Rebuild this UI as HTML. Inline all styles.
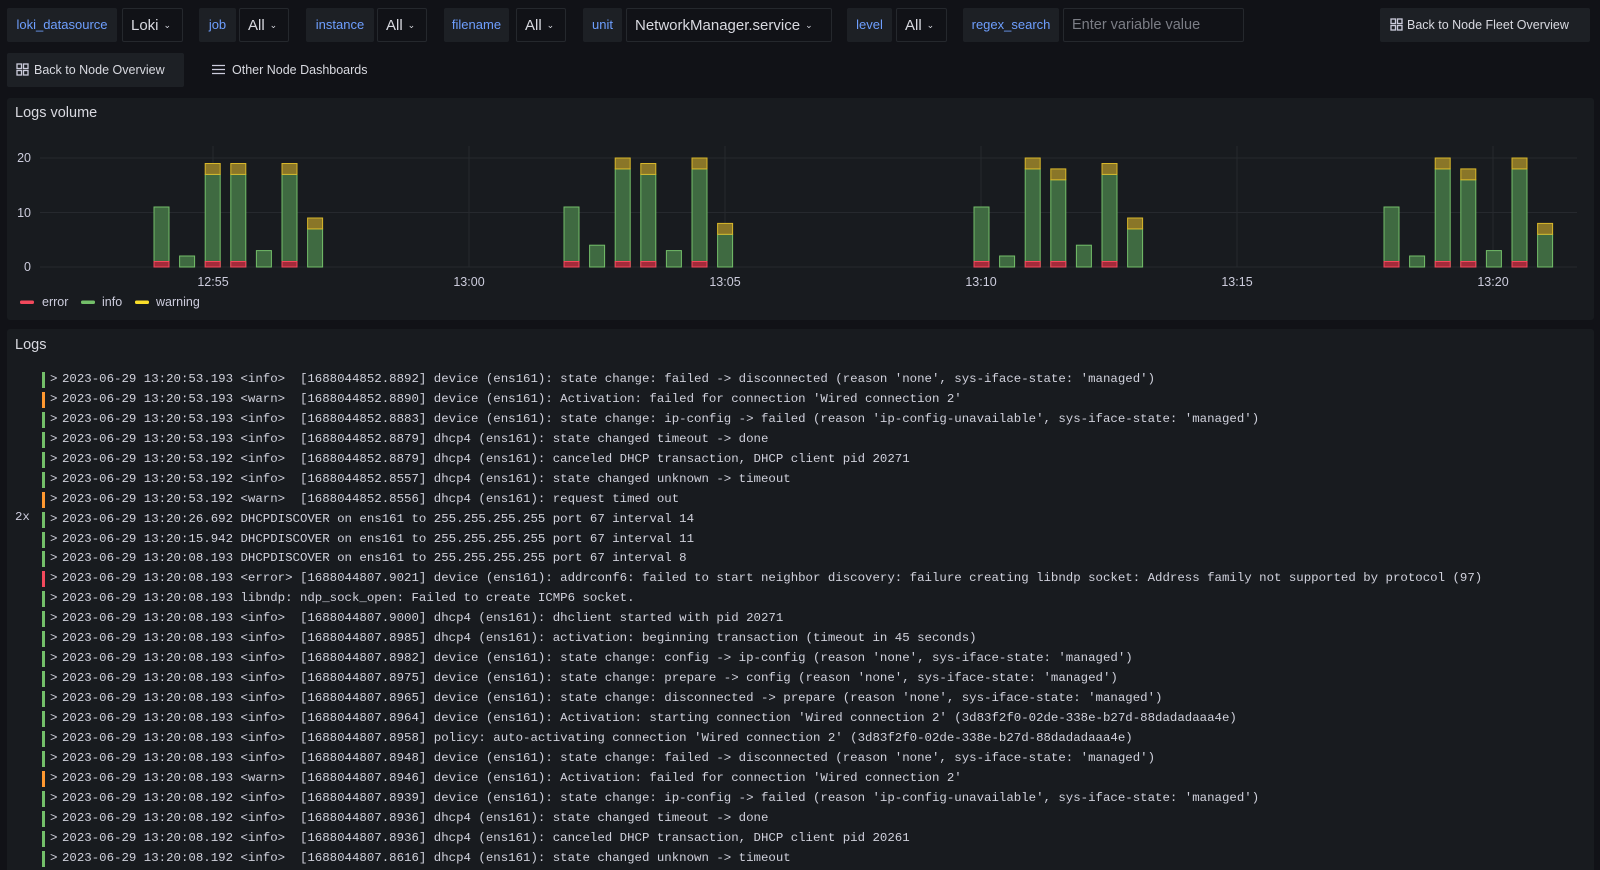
<!DOCTYPE html>
<html><head><meta charset="utf-8"><style>
*{box-sizing:border-box;margin:0;padding:0}
html,body{width:1600px;height:870px;overflow:hidden}
body{background:#111217;font-family:"Liberation Sans",sans-serif;color:#ccccdc;position:relative}
.a{position:absolute}
.lab{position:absolute;top:8px;height:34px;background:#1d2025;border-radius:2px;color:#6e9fff;font-size:13px;line-height:34px;text-align:center}
.val{position:absolute;top:8px;height:34px;background:#111217;border:1px solid #25282d;border-radius:2px;color:#d8d9e0;font-size:15px;line-height:32px;padding-left:8px}
.val i{font-style:normal;font-size:9px;margin-left:5px;vertical-align:2px}
.btn{position:absolute;background:#1d2025;border-radius:2px;font-size:12.5px;color:#d8d9e0;line-height:34px;height:34px}
.panel{position:absolute;background:#181b1f;border-radius:3px;left:7px;width:1587px}
.logs{position:absolute;left:0;top:370px;font-family:"Liberation Mono",monospace;font-size:12.4px;line-height:19.95px;color:#d0d1dc}
.row{position:relative;height:19.95px;padding-left:62px;white-space:pre}
.row:before{content:"";position:absolute;left:42px;top:2px;width:3px;height:16px;background:#73bf69}
.row:after{content:">";position:absolute;left:50px;top:0}
.row.w:before{background:#ff9830}
.row.e:before{background:#f2495c}
.g{fill:#3f6a41;stroke:#73bf69;stroke-width:1}
.r{fill:#a52a3a;stroke:#f2495c;stroke-width:1}
.w{fill:#8a7628;stroke:#d8b72a;stroke-width:1}
</style></head><body>
<div class="lab" style="left:7px;width:110px">loki_datasource</div>
<div class="val" style="left:122px;width:61px">Loki<i>⌄</i></div>
<div class="lab" style="left:199px;width:37px">job</div>
<div class="val" style="left:239px;width:50px">All<i>⌄</i></div>
<div class="lab" style="left:306px;width:68px">instance</div>
<div class="val" style="left:377px;width:50px">All<i>⌄</i></div>
<div class="lab" style="left:444px;width:65px">filename</div>
<div class="val" style="left:516px;width:50px">All<i>⌄</i></div>
<div class="lab" style="left:583px;width:39px">unit</div>
<div class="val" style="left:626px;width:206px">NetworkManager.service<i>⌄</i></div>
<div class="lab" style="left:847px;width:45px">level</div>
<div class="val" style="left:896px;width:51px">All<i>⌄</i></div>
<div class="lab" style="left:963px;width:96px">regex_search</div>
<div class="val" style="left:1063px;width:181px;color:#7b7d85;font-size:14.5px">Enter variable value</div>
<div class="btn" style="left:1380px;top:8px;width:210px;padding-left:10px">
<svg width="13" height="13" viewBox="0 0 13 13" style="vertical-align:-2px;margin-right:4px" fill="none" stroke="#ccccdc" stroke-width="1.3"><rect x="1" y="1" width="4.5" height="4.5"/><rect x="7.5" y="1" width="4.5" height="4.5"/><rect x="1" y="7.5" width="4.5" height="4.5"/><rect x="7.5" y="7.5" width="4.5" height="4.5"/></svg>Back to Node Fleet Overview</div>
<div class="btn" style="left:7px;top:53px;width:177px;padding-left:9px">
<svg width="13" height="13" viewBox="0 0 13 13" style="vertical-align:-2px;margin-right:5px" fill="none" stroke="#ccccdc" stroke-width="1.3"><rect x="1" y="1" width="4.5" height="4.5"/><rect x="7.5" y="1" width="4.5" height="4.5"/><rect x="1" y="7.5" width="4.5" height="4.5"/><rect x="7.5" y="7.5" width="4.5" height="4.5"/></svg>Back to Node Overview</div>
<div class="a" style="left:212px;top:53px;line-height:34px;font-size:12.5px;color:#d8d9e0"><svg width="13" height="11" viewBox="0 0 13 11" style="vertical-align:-1px;margin-right:7px" stroke="#ccccdc" stroke-width="1.3"><path d="M0 1.5H13M0 5.5H13M0 9.5H13"/></svg>Other Node Dashboards</div>

<div class="panel" style="top:98px;height:222px"></div>
<div class="a" style="left:15px;top:105px;font-size:14.5px;color:#d8d9e0">Logs volume</div>
<svg class="a" style="left:0;top:0" width="1600" height="330">
<g stroke="#26292e" stroke-width="1">
<path d="M40 158H1577M40 212.5H1577M40 267H1577"/>
<path d="M213 146V267M469 146V267M725 146V267M981 146V267M1237 146V267M1493 146V267"/>
</g>
<g font-family="Liberation Sans" font-size="12.5" fill="#ccccdc">
<text x="31" y="162" text-anchor="end">20</text>
<text x="31" y="217" text-anchor="end">10</text>
<text x="31" y="271" text-anchor="end">0</text>
<text x="213" y="286" text-anchor="middle">12:55</text>
<text x="469" y="286" text-anchor="middle">13:00</text>
<text x="725" y="286" text-anchor="middle">13:05</text>
<text x="981" y="286" text-anchor="middle">13:10</text>
<text x="1237" y="286" text-anchor="middle">13:15</text>
<text x="1493" y="286" text-anchor="middle">13:20</text>
<text x="42" y="306">error</text>
<text x="102" y="306">info</text>
<text x="156" y="306">warning</text>
</g>
<rect x="20" y="300.5" width="14" height="3.5" rx="1.5" fill="#f2495c"/>
<rect x="81" y="300.5" width="14" height="3.5" rx="1.5" fill="#73bf69"/>
<rect x="135" y="300.5" width="14" height="3.5" rx="1.5" fill="#fade2a"/>

<g transform="translate(154,0)"><rect class="g" x="0" y="207" width="15" height="60"/><rect class="r" x="0" y="261.5" width="15" height="5.5"/></g>
<g transform="translate(179.6,0)"><rect class="g" x="0" y="256" width="15" height="11"/></g>
<g transform="translate(205.2,0)"><rect class="g" x="0" y="174.4" width="15" height="92.6"/><rect class="r" x="0" y="261.5" width="15" height="5.5"/><rect class="w" x="0" y="163.5" width="15" height="10.9"/></g>
<g transform="translate(230.8,0)"><rect class="g" x="0" y="174.4" width="15" height="92.6"/><rect class="r" x="0" y="261.5" width="15" height="5.5"/><rect class="w" x="0" y="163.5" width="15" height="10.9"/></g>
<g transform="translate(256.4,0)"><rect class="g" x="0" y="250.6" width="15" height="16.4"/></g>
<g transform="translate(282,0)"><rect class="g" x="0" y="174.4" width="15" height="92.6"/><rect class="r" x="0" y="261.5" width="15" height="5.5"/><rect class="w" x="0" y="163.5" width="15" height="10.9"/></g>
<g transform="translate(307.6,0)"><rect class="g" x="0" y="228.9" width="15" height="38.1"/><rect class="w" x="0" y="218" width="15" height="10.9"/></g>
<g transform="translate(564,0)"><rect class="g" x="0" y="207" width="15" height="60"/><rect class="r" x="0" y="261.5" width="15" height="5.5"/></g>
<g transform="translate(589.6,0)"><rect class="g" x="0" y="245.2" width="15" height="21.8"/></g>
<g transform="translate(615.2,0)"><rect class="g" x="0" y="168.9" width="15" height="98.1"/><rect class="r" x="0" y="261.5" width="15" height="5.5"/><rect class="w" x="0" y="158" width="15" height="10.9"/></g>
<g transform="translate(640.8,0)"><rect class="g" x="0" y="174.4" width="15" height="92.6"/><rect class="r" x="0" y="261.5" width="15" height="5.5"/><rect class="w" x="0" y="163.5" width="15" height="10.9"/></g>
<g transform="translate(666.4,0)"><rect class="g" x="0" y="250.6" width="15" height="16.4"/></g>
<g transform="translate(692,0)"><rect class="g" x="0" y="168.9" width="15" height="98.1"/><rect class="r" x="0" y="261.5" width="15" height="5.5"/><rect class="w" x="0" y="158" width="15" height="10.9"/></g>
<g transform="translate(717.6,0)"><rect class="g" x="0" y="234.3" width="15" height="32.7"/><rect class="w" x="0" y="223.4" width="15" height="10.9"/></g>
<g transform="translate(974,0)"><rect class="g" x="0" y="207" width="15" height="60"/><rect class="r" x="0" y="261.5" width="15" height="5.5"/></g>
<g transform="translate(999.6,0)"><rect class="g" x="0" y="256" width="15" height="11"/></g>
<g transform="translate(1025.2,0)"><rect class="g" x="0" y="168.9" width="15" height="98.1"/><rect class="r" x="0" y="261.5" width="15" height="5.5"/><rect class="w" x="0" y="158" width="15" height="10.9"/></g>
<g transform="translate(1050.8,0)"><rect class="g" x="0" y="179.8" width="15" height="87.2"/><rect class="r" x="0" y="261.5" width="15" height="5.5"/><rect class="w" x="0" y="168.9" width="15" height="10.9"/></g>
<g transform="translate(1076.4,0)"><rect class="g" x="0" y="245.2" width="15" height="21.8"/></g>
<g transform="translate(1102,0)"><rect class="g" x="0" y="174.4" width="15" height="92.6"/><rect class="r" x="0" y="261.5" width="15" height="5.5"/><rect class="w" x="0" y="163.5" width="15" height="10.9"/></g>
<g transform="translate(1127.6,0)"><rect class="g" x="0" y="228.9" width="15" height="38.1"/><rect class="w" x="0" y="218" width="15" height="10.9"/></g>
<g transform="translate(1384,0)"><rect class="g" x="0" y="207" width="15" height="60"/><rect class="r" x="0" y="261.5" width="15" height="5.5"/></g>
<g transform="translate(1409.6,0)"><rect class="g" x="0" y="256" width="15" height="11"/></g>
<g transform="translate(1435.2,0)"><rect class="g" x="0" y="168.9" width="15" height="98.1"/><rect class="r" x="0" y="261.5" width="15" height="5.5"/><rect class="w" x="0" y="158" width="15" height="10.9"/></g>
<g transform="translate(1460.8,0)"><rect class="g" x="0" y="179.8" width="15" height="87.2"/><rect class="r" x="0" y="261.5" width="15" height="5.5"/><rect class="w" x="0" y="168.9" width="15" height="10.9"/></g>
<g transform="translate(1486.4,0)"><rect class="g" x="0" y="250.6" width="15" height="16.4"/></g>
<g transform="translate(1512,0)"><rect class="g" x="0" y="168.9" width="15" height="98.1"/><rect class="r" x="0" y="261.5" width="15" height="5.5"/><rect class="w" x="0" y="158" width="15" height="10.9"/></g>
<g transform="translate(1537.6,0)"><rect class="g" x="0" y="234.3" width="15" height="32.7"/><rect class="w" x="0" y="223.4" width="15" height="10.9"/></g>
</svg>

<div class="panel" style="top:329px;height:560px"></div>
<div class="a" style="left:15px;top:337px;font-size:14.5px;color:#d8d9e0">Logs</div>
<div class="a" style="left:15px;top:510px;font-family:'Liberation Mono',monospace;font-size:12.4px;color:#ccccdc">2x</div>
<div class="logs"><div class="row">2023-06-29 13:20:53.193 &lt;info&gt;  [1688044852.8892] device (ens161): state change: failed -&gt; disconnected (reason 'none', sys-iface-state: 'managed')</div><div class="row w">2023-06-29 13:20:53.193 &lt;warn&gt;  [1688044852.8890] device (ens161): Activation: failed for connection 'Wired connection 2'</div><div class="row">2023-06-29 13:20:53.193 &lt;info&gt;  [1688044852.8883] device (ens161): state change: ip-config -&gt; failed (reason 'ip-config-unavailable', sys-iface-state: 'managed')</div><div class="row">2023-06-29 13:20:53.193 &lt;info&gt;  [1688044852.8879] dhcp4 (ens161): state changed timeout -&gt; done</div><div class="row">2023-06-29 13:20:53.192 &lt;info&gt;  [1688044852.8879] dhcp4 (ens161): canceled DHCP transaction, DHCP client pid 20271</div><div class="row">2023-06-29 13:20:53.192 &lt;info&gt;  [1688044852.8557] dhcp4 (ens161): state changed unknown -&gt; timeout</div><div class="row w">2023-06-29 13:20:53.192 &lt;warn&gt;  [1688044852.8556] dhcp4 (ens161): request timed out</div><div class="row">2023-06-29 13:20:26.692 DHCPDISCOVER on ens161 to 255.255.255.255 port 67 interval 14</div><div class="row">2023-06-29 13:20:15.942 DHCPDISCOVER on ens161 to 255.255.255.255 port 67 interval 11</div><div class="row">2023-06-29 13:20:08.193 DHCPDISCOVER on ens161 to 255.255.255.255 port 67 interval 8</div><div class="row e">2023-06-29 13:20:08.193 &lt;error&gt; [1688044807.9021] device (ens161): addrconf6: failed to start neighbor discovery: failure creating libndp socket: Address family not supported by protocol (97)</div><div class="row">2023-06-29 13:20:08.193 libndp: ndp_sock_open: Failed to create ICMP6 socket.</div><div class="row">2023-06-29 13:20:08.193 &lt;info&gt;  [1688044807.9000] dhcp4 (ens161): dhclient started with pid 20271</div><div class="row">2023-06-29 13:20:08.193 &lt;info&gt;  [1688044807.8985] dhcp4 (ens161): activation: beginning transaction (timeout in 45 seconds)</div><div class="row">2023-06-29 13:20:08.193 &lt;info&gt;  [1688044807.8982] device (ens161): state change: config -&gt; ip-config (reason 'none', sys-iface-state: 'managed')</div><div class="row">2023-06-29 13:20:08.193 &lt;info&gt;  [1688044807.8975] device (ens161): state change: prepare -&gt; config (reason 'none', sys-iface-state: 'managed')</div><div class="row">2023-06-29 13:20:08.193 &lt;info&gt;  [1688044807.8965] device (ens161): state change: disconnected -&gt; prepare (reason 'none', sys-iface-state: 'managed')</div><div class="row">2023-06-29 13:20:08.193 &lt;info&gt;  [1688044807.8964] device (ens161): Activation: starting connection 'Wired connection 2' (3d83f2f0-02de-338e-b27d-88dadadaaa4e)</div><div class="row">2023-06-29 13:20:08.193 &lt;info&gt;  [1688044807.8958] policy: auto-activating connection 'Wired connection 2' (3d83f2f0-02de-338e-b27d-88dadadaaa4e)</div><div class="row">2023-06-29 13:20:08.193 &lt;info&gt;  [1688044807.8948] device (ens161): state change: failed -&gt; disconnected (reason 'none', sys-iface-state: 'managed')</div><div class="row w">2023-06-29 13:20:08.193 &lt;warn&gt;  [1688044807.8946] device (ens161): Activation: failed for connection 'Wired connection 2'</div><div class="row">2023-06-29 13:20:08.192 &lt;info&gt;  [1688044807.8939] device (ens161): state change: ip-config -&gt; failed (reason 'ip-config-unavailable', sys-iface-state: 'managed')</div><div class="row">2023-06-29 13:20:08.192 &lt;info&gt;  [1688044807.8936] dhcp4 (ens161): state changed timeout -&gt; done</div><div class="row">2023-06-29 13:20:08.192 &lt;info&gt;  [1688044807.8936] dhcp4 (ens161): canceled DHCP transaction, DHCP client pid 20261</div><div class="row">2023-06-29 13:20:08.192 &lt;info&gt;  [1688044807.8616] dhcp4 (ens161): state changed unknown -&gt; timeout</div></div>
</body></html>
